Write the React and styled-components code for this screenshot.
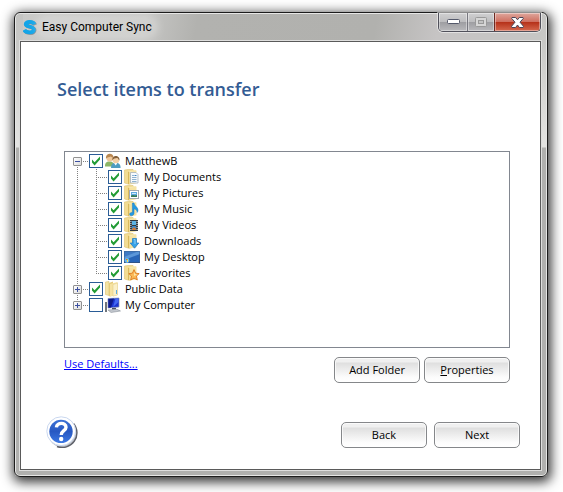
import React, { useState } from 'react'
import styled, { createGlobalStyle, css } from 'styled-components'

const items = [
  { id: 'documents', label: 'My Documents', icon: 'documents' },
  { id: 'pictures', label: 'My Pictures', icon: 'pictures' },
  { id: 'music', label: 'My Music', icon: 'music' },
  { id: 'videos', label: 'My Videos', icon: 'videos' },
  { id: 'downloads', label: 'Downloads', icon: 'downloads' },
  { id: 'desktop', label: 'My Desktop', icon: 'desktop' },
  { id: 'favorites', label: 'Favorites', icon: 'favorites' },
]

const Folder = () => (
  <>
    <path d="M0.5 1L4 0.5H9L10 1.5V14L4 15L0.5 14Z" fill="#f3dc92" stroke="#dcc272" strokeWidth="0.6" />
    <path d="M4 2.5L12 1V14L5 15.7L4 15Z" fill="#f8eab8" />
    <path d="M4 2.5L5.5 3V15.6L4 15Z" fill="#d9b95c" />
    <path d="M5.5 3L12.5 1.6V14.2L5.5 15.6Z" fill="#f6e3a2" />
  </>
)

const art = {
  documents: (
    <>
      <Folder />
      <path d="M6.5 3.5H12L14 5.5V14H6.5Z" fill="#f7fafd" stroke="#a5b2be" strokeWidth="0.8" />
      <path d="M8 6.5H10M8 8.5H12.5M8 10.5H12.5M8 12.5H12.5" stroke="#8fb2cf" />
      <path d="M10.5 6.5H12.5" stroke="#3f87c4" />
    </>
  ),
  pictures: (
    <>
      <Folder />
      <rect x="5.5" y="5.5" width="9" height="8" fill="#fff" stroke="#a4abb2" />
      <rect x="7" y="7" width="6" height="5" fill="#5fa9e0" />
      <path d="M7 12V10.5L9 10L11 10.5L13 10V12Z" fill="#367a55" />
      <rect x="8" y="8" width="4" height="1" fill="#d3ebfa" />
    </>
  ),
  music: (
    <>
      <Folder />
      <path d="M8.4 2H10C10.2 5 14 6 14 9C14 10.3 13.5 11 13 11.5C13.3 9.5 12 8.4 10 7.8V12.5C9.8 14.8 6 15.7 5.7 13.6C5.5 12 7 11.2 8.4 11.5Z" fill="#2399e2" stroke="#1677c0" strokeWidth="0.5" />
    </>
  ),
  videos: (
    <>
      <Folder />
      <path d="M6 3H14V14H6Z" fill="#343b42" />
      <path d="M8 4H12V8H8Z" fill="#5cb2e4" />
      <path d="M8 9H12V13H8Z" fill="#3d87c7" />
      <path d="M8 12L10 10L12 12V13H8Z" fill="#d47b36" />
      <path d="M6.9 4V14M13.1 4V14" stroke="#e6e9ec" strokeDasharray="1 1" />
    </>
  ),
  downloads: (
    <>
      <Folder />
      <path d="M8.5 5.5H12.5V10H14.8L10.5 15.2L6.2 10H8.5Z" fill="#36a2e8" stroke="#1d78c2" strokeWidth="0.7" />
      <path d="M9.7 6.5H11V11" stroke="#8fd0f6" fill="none" />
    </>
  ),
  desktop: (
    <>
      <rect x="0" y="2" width="16" height="12" fill="#2966b8" />
      <path d="M0 2H16V5L0 11Z" fill="#5b97d9" />
      <path d="M0 2H15L0 8Z" fill="#3f7ac4" />
      <rect x="0" y="13" width="16" height="1" fill="#1c3c70" />
      <rect x="0.5" y="2.5" width="15" height="11" fill="none" stroke="#3c6294" strokeOpacity="0.6" />
      <circle cx="3" cy="11.5" r="2.4" fill="#6bb8ee" />
      <path d="M2 10H3V11H2Z" fill="#f05b2a" />
      <path d="M3 10H4V11H3Z" fill="#8fd441" />
      <path d="M3 11H4V13H3Z" fill="#ffe14b" />
    </>
  ),
  favorites: (
    <>
      <Folder />
      <path d="M10 4.6L11.6 8.2L15.2 8.6L12.5 11.1L13.3 15L10 13.1L6.7 15L7.5 11.1L4.8 8.6L8.4 8.2Z" fill="#fbb955" stroke="#de7a20" strokeWidth="0.9" />
      <path d="M10 6.6L10.9 9.1L13 9.5L10 11Z" fill="#ffe6ab" />
    </>
  ),
  public: (
    <>
      <path d="M0.5 1L4 0.5V14.5L0.5 13.5Z" fill="#f5e3a4" stroke="#dcc272" strokeWidth="0.6" />
      <path d="M4 2L8 0.5V14.5L5 15.5L4 15Z" fill="#e6cc7a" />
      <path d="M5 3L12.5 1V14L5 15.6Z" fill="#f6e3a2" />
      <path d="M8 3.5L12.5 2V14L8 15.2Z" fill="#fbf0c8" stroke="#dcc272" strokeWidth="0.4" />
      <rect x="11" y="9" width="1" height="4" fill="#5eabe0" />
    </>
  ),
  users: (
    <>
      <path d="M0 13.5C0 10 1 8.5 4.5 8.5S9 10 9 13.5Z" fill="#8db667" />
      <circle cx="4.8" cy="5" r="3.4" fill="#efc79a" />
      <path d="M1 5.8C0 -.8 9 -1.1 8.6 5C7 4.7 6.4 3.9 5.7 3.6C4.2 4.6 2.2 3.8 1 5.8Z" fill="#b98750" />
      <path d="M6 15C6 11.4 7.6 9.8 10.7 9.8S15.6 11.4 15.6 15Z" fill="#4f9cc0" />
      <path d="M9 9.9L10.7 12.5L12.4 9.9Z" fill="#fff" />
      <circle cx="10.9" cy="7" r="3.3" fill="#f4cfa4" />
      <path d="M7.4 7.4C6.5 1.4 15.2 1.4 14.5 7.4C13.1 6.6 13.2 5.2 12.1 5C10.2 5.5 8.3 5.2 7.4 7.4Z" fill="#85603a" />
    </>
  ),
  computer: (
    <>
      <path d="M0 5H2V15H0Z" fill="#70757c" />
      <path d="M3 1.5L14 1V10L3 11Z" fill="#1c35d0" stroke="#8792ac" strokeWidth="0.7" />
      <path d="M3.5 2L9 1.6L6 10.4L3.5 10.7Z" fill="#101b88" />
      <path d="M10.5 1.6L13.5 1.4V5L8 10Z" fill="#4368f2" />
      <path d="M7 11H11V12.5H7Z" fill="#4c5361" />
      <path d="M3 13L12 12.3L15.5 14L6 15.5Z" fill="#c3c8cf" stroke="#7d848f" strokeWidth="0.5" />
    </>
  ),
}

const CheckItem = ({ id, label, icon, defaultChecked }) => (
  <Item htmlFor={id}>
    <Check>
      <input id={id} type="checkbox" defaultChecked={defaultChecked} />
      <svg viewBox="0 0 14 14" aria-hidden="true">
        <path d="M3 5.4V8.6L5.6 11.4L11 5.6V2.6L5.6 8.2Z" fill="#229c35" />
      </svg>
    </Check>
    <ItemIcon viewBox="0 0 16 16" aria-hidden="true">{art[icon]}</ItemIcon>
    <span>{label}</span>
  </Item>
)

const App = () => {
  const [open, setOpen] = useState(true)

  return (
    <Page>
      <GlobalStyle />
      <Window>
        <TitleBar>
          <Logo viewBox="0 0 14 15" aria-hidden="true">
            <path d="M12.2 5C11 1.9 3.3 1.3 3.3 4.6C3.3 7.8 11.6 6.2 11.6 10.2C11.6 14 3.4 13.6 1.8 10.4" fill="none" stroke="#7f8b93" strokeWidth="3.8" />
            <path d="M11.4 4.4C10.2 1.4 2.7 1 2.7 4.2C2.7 7.3 10.9 5.6 10.9 9.8C10.9 13.4 2.8 13 1.2 9.8" fill="none" stroke="#12a5e8" strokeWidth="3.8" />
          </Logo>
          <Title>Easy Computer Sync</Title>
          <Controls>
            <ControlButton $width={28} aria-label="Minimize">
              <svg width="13" height="6" viewBox="0 0 13 6">
                <rect x="0.5" y="0.5" width="12" height="4" rx="1" fill="#fff" stroke="#54596b" />
              </svg>
            </ControlButton>
            <ControlButton $width={27} aria-label="Maximize" disabled>
              <svg width="12" height="10" viewBox="0 0 12 10">
                <rect x="0.5" y="0.5" width="11" height="9" rx="1" fill="#d6d6d6" stroke="#999" />
                <rect x="3.5" y="3.5" width="5" height="3" fill="#c3c3c3" stroke="#999" />
              </svg>
            </ControlButton>
            <ControlButton $width={46} $close aria-label="Close">
              <svg width="13" height="11" viewBox="0 0 13 11">
                <path d="M1 .5H4.6L6.5 2.8L8.4 .5H12L12.4 1.3L9 5.2L12.5 9.3L12 10.5H8.4L6.5 8L4.6 10.5H1L.5 9.3L4 5.2L.6 1.3Z" fill="#fff" stroke="#4a4658" />
              </svg>
            </ControlButton>
          </Controls>
        </TitleBar>

        <Client>
          <Heading>Select items to transfer</Heading>
          <Tree>
            <li>
              <Row>
                <Branch $line="down">
                  <Toggle aria-label="MatthewB" aria-expanded={open} onClick={() => setOpen(!open)} $open={open} />
                </Branch>
                <CheckItem id="user" label="MatthewB" icon="users" defaultChecked />
              </Row>
              {open && (
                <List>
                  {items.map((item, i) => (
                    <li key={item.id}>
                      <Row>
                        <Guide />
                        <Branch $line={i === items.length - 1 ? 'up' : 'full'} />
                        <CheckItem {...item} defaultChecked />
                      </Row>
                    </li>
                  ))}
                </List>
              )}
            </li>
            <li>
              <Row>
                <Branch $line="full">
                  <Toggle aria-label="Public Data" aria-expanded={false} />
                </Branch>
                <CheckItem id="public" label="Public Data" icon="public" defaultChecked />
              </Row>
            </li>
            <li>
              <Row>
                <Branch $line="up">
                  <Toggle aria-label="My Computer" aria-expanded={false} />
                </Branch>
                <CheckItem id="computer" label="My Computer" icon="computer" />
              </Row>
            </li>
          </Tree>
          <Actions>
            <DefaultsLink href="#defaults">Use Defaults...</DefaultsLink>
            <Group>
              <Button>Add Folder</Button>
              <Button><u>P</u>roperties</Button>
            </Group>
          </Actions>
          <Footer>
            <HelpButton aria-label="Help">
              <svg width="32" height="32" viewBox="0 0 32 32">
                <defs>
                  <linearGradient id="help" x1="0" y1="0" x2="0" y2="1">
                    <stop offset="0" stopColor="#3b71d6" />
                    <stop offset="0.5" stopColor="#2858c2" />
                    <stop offset="1" stopColor="#3c78e4" />
                  </linearGradient>
                </defs>
                <circle cx="16.6" cy="17" r="14.4" fill="#b9bcc3" />
                <path d="M27.5 7.5A14.6 14.6 0 0 1 11 30.5" fill="none" stroke="#5c5f68" strokeWidth="1.4" />
                <circle cx="15.2" cy="15.2" r="14.4" fill="#fff" stroke="#c9d7ef" strokeWidth="1" />
                <circle cx="15" cy="15.4" r="11.7" fill="url(#help)" />
                <path d="M10.4 11.4C10.8 6.2 20 6 20 11.2C20 14.8 15.2 14.6 15.2 19" fill="none" stroke="#fff" strokeWidth="3.4" />
                <circle cx="15.2" cy="23" r="2.2" fill="#fff" />
              </svg>
            </HelpButton>
            <Group $wide>
              <Button>Back</Button>
              <Button>Next</Button>
            </Group>
          </Footer>
        </Client>
      </Window>
    </Page>
  )
}

export default App

const GlobalStyle = createGlobalStyle`
*{
    box-sizing: border-box;
}
body{
    margin: 0;
    background: #fff;
    font-family: "Open Sans", "Noto Sans", sans-serif;
    font-size: 11px;
    color: #000;
}
button{
    font: inherit;
    color: inherit;
    padding: 0;
}
`

const Page = styled.div`
display: flex;
min-height: 100vh;
padding: 12px 15px 15px 14px;
overflow: hidden;
`

const Window = styled.main`
flex: 1;
display: flex;
flex-direction: column;
padding: 0 6px 6px 5px;
border: 1px solid #1c1c1c;
border-radius: 6px;
background: linear-gradient(180deg, #c4c4c2 0, #c8c8c6 30px, #e4e4e2 134px, #b0b0ae 135px);
box-shadow: inset 0 0 0 1px #e6e6e5, 1px 3px 12px 2px rgba(0, 0, 0, 0.8);
`

const TitleBar = styled.header`
display: flex;
align-items: center;
height: 28px;
padding-left: 3px;
background: linear-gradient(100deg, #cacac8 0, #c6c6c4 24%, #b2b2af 34%, #b1b1ae 68%, #c6c4c4 80%, #c6c6c4 100%);
background-clip: content-box;
box-shadow: inset 0 1px 0 #e6e6e5;
`

const Logo = styled.svg`
width: 14px;
height: 15px;
`

const Title = styled.h1`
margin: 0 0 0 1px;
padding: 0 4px;
font-family: Roboto, "Open Sans", sans-serif;
font-size: 12px;
font-weight: 400;
line-height: 18px;
border-radius: 9px;
background: rgba(255, 255, 255, 0.2);
box-shadow: 0 0 8px 2px rgba(255, 255, 255, 0.3);
`

const Controls = styled.div`
display: flex;
align-self: flex-start;
height: 19px;
margin-left: auto;
border: 1px solid #50505a;
border-top: 0;
border-radius: 0 0 5px 5px;
overflow: hidden;
box-shadow: 0 0 0 1px rgba(255, 255, 255, 0.5);
`

const ControlButton = styled.button`
display: flex;
align-items: center;
justify-content: center;
width: ${({ $width }) => $width}px;
border: 0;
border-left: 1px solid #77777f;
background: linear-gradient(#d0d0d1 0, #bdbdbf 48%, #9d9da1 50%, #b9b9bc 100%);
box-shadow: inset 0 0 0 1px rgba(255, 255, 255, 0.4);
&:first-child{
    border-left: 0;
}
${({ $close }) => $close && css`
border-left-color: #6b2a22;
background: linear-gradient(#dfa79d 0, #cf6f60 48%, #b52f18 50%, #d5694f 100%);
`}
`

const Client = styled.section`
flex: 1;
display: flex;
flex-direction: column;
padding: 35px 30px 21px;
border: 1px solid #5a5a5a;
background: #fff;
box-shadow: 0 0 0 1px #dededd;
`

const Heading = styled.h2`
margin: 0 0 50px 6px;
font-size: 18px;
font-weight: 600;
line-height: 24px;
color: #335c94;
`

const List = styled.ul`
margin: 0;
padding: 0;
list-style: none;
`

const Tree = styled(List)`
flex: 1;
margin-left: 13px;
padding: 1px 8px;
border: 1px solid #828790;
background: #fff;
`

const Row = styled.div`
display: flex;
height: 16px;
`

const dotsDown = 'repeating-linear-gradient(180deg, #808080 0 1px, transparent 1px 2px)'
const dotsAcross = 'repeating-linear-gradient(90deg, #808080 0 1px, transparent 1px 2px)'

const lines = {
  full: '4px 0 / 1px 16px',
  down: '4px 8px / 1px 8px',
  up: '4px 0 / 1px 8px',
}

const Guide = styled.span`
width: 19px;
background: ${dotsDown} ${lines.full} no-repeat;
`

const Branch = styled.span`
display: flex;
align-items: center;
width: 16px;
background:
    ${dotsDown} ${({ $line }) => lines[$line]} no-repeat,
    ${dotsAcross} 4px 8px / 12px 1px no-repeat;
`

const Toggle = styled.button`
width: 9px;
height: 9px;
margin-top: 1px;
border: 1px solid #919191;
border-radius: 1px;
background:
    linear-gradient(#3c4fa0, #3c4fa0) center / 5px 1px no-repeat,
    ${({ $open }) => !$open && 'linear-gradient(#3c4fa0, #3c4fa0) center / 1px 5px no-repeat,'}
    linear-gradient(135deg, #fff, #dcdcdc);
`

const Item = styled.label`
display: flex;
align-items: center;
line-height: 16px;
white-space: nowrap;
`

const Check = styled.span`
display: grid;
width: 14px;
height: 14px;
input, svg{
    grid-area: 1 / 1;
    width: 14px;
    height: 14px;
    margin: 0;
}
input{
    appearance: none;
    border: 1px solid #2a5c96;
    background: #fff;
}
svg{
    visibility: hidden;
    pointer-events: none;
}
input:checked + svg{
    visibility: visible;
}
`

const ItemIcon = styled.svg`
width: 16px;
height: 16px;
margin: 0 4px 0 2px;
`

const Actions = styled.div`
display: flex;
align-items: flex-start;
justify-content: space-between;
margin: 9px 0 33px 13px;
`

const DefaultsLink = styled.a`
line-height: 14px;
color: #0000ff;
`

const Group = styled.div`
display: flex;
gap: ${({ $wide }) => ($wide ? 7 : 4)}px;
`

const Button = styled.button`
width: 86px;
height: 26px;
padding-bottom: 2px;
border: 1px solid #85878a;
border-radius: 5px;
background: linear-gradient(#f0f0f0 0, #f0f0f0 4px, #dfdfdf 5px, #fcfcfc 80%, #fff 100%);
box-shadow: inset 0 0 0 1px rgba(255, 255, 255, 0.7);
`

const Footer = styled.footer`
display: flex;
align-items: flex-end;
justify-content: space-between;
margin: 0 -10px 0 -5px;
`

const HelpButton = styled.button`
display: flex;
border: 0;
background: none;
`
